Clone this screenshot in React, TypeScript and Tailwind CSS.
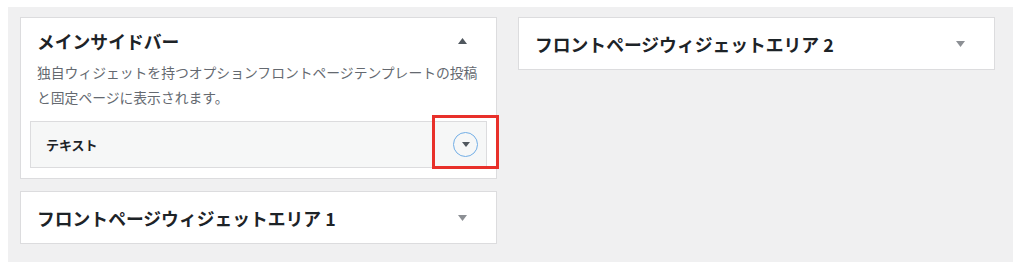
import React from 'react';

const FONT = "font-['Noto_Sans_CJK_JP','Noto_Sans',sans-serif]";

function Arrow({ up = false, dark = false }: { up?: boolean; dark?: boolean }) {
  return (
    <svg width="9" height="6" viewBox="0 0 9 6" className="shrink-0">
      <path d={up ? 'M0 6 L4.5 0 L9 6 Z' : 'M0 0 L9 0 L4.5 6 Z'} fill={dark ? '#50575e' : '#8c8f94'} />
    </svg>
  );
}

function CollapsedArea({ title }: { title: string }) {
  return (
    <div className="bg-white border border-[#dcdcde] h-[53px] flex items-center pl-4 pr-[29px]">
      <h2 className="flex-1 text-[17.8px] font-bold text-[#1d2327] leading-6">{title}</h2>
      <Arrow />
    </div>
  );
}

export default function App() {
  return (
    <div className={`w-[1024px] h-[271px] bg-white pt-[7px] pl-[8px] ${FONT}`}>
      <div className="w-[1005px] h-[255px] bg-[#f0f0f1] pt-[10px] pl-[12px] pr-[18px] grid grid-cols-2 gap-x-[21px] items-start">
        {/* left column */}
        <div className="flex flex-col gap-[12px]">
          <div className="relative bg-white border border-[#dcdcde] px-[9px] pb-[10px]">
            <div className="flex items-center pt-[11px] pl-[7px] pr-[20px]">
              <h2 className="flex-1 text-[17.8px] font-bold text-[#1d2327] leading-6">メインサイドバー</h2>
              <Arrow up dark />
            </div>
            <p className="mt-[7px] pl-[7px] text-[13.8px] leading-[25px] text-[#646970]">
              独自ウィジェットを持つオプションフロントページテンプレートの投稿と固定ページに表示されます。
            </p>
            <div className="mt-[11px] h-[47px] bg-[#f6f7f7] border border-[#dcdcde] flex items-center pl-[15px] pr-[8px]">
              <h3 className="flex-1 text-[13px] font-bold text-[#1d2327]">テキスト</h3>
              <span className="w-[25px] h-[25px] rounded-full border border-[#72aee6] flex items-center justify-center">
                <svg width="8" height="5" viewBox="0 0 8 5">
                  <path d="M0 0 L8 0 L4 5 Z" fill="#50575e" />
                </svg>
              </span>
            </div>
            <div className="absolute left-[411px] top-[97px] w-[67px] h-[54px] border-[3px] border-[#e8302a]" />
          </div>
          <CollapsedArea title="フロントページウィジェットエリア 1" />
        </div>

        {/* right column */}
        <div className="flex flex-col">
          <CollapsedArea title="フロントページウィジェットエリア 2" />
        </div>
      </div>
    </div>
  );
}
